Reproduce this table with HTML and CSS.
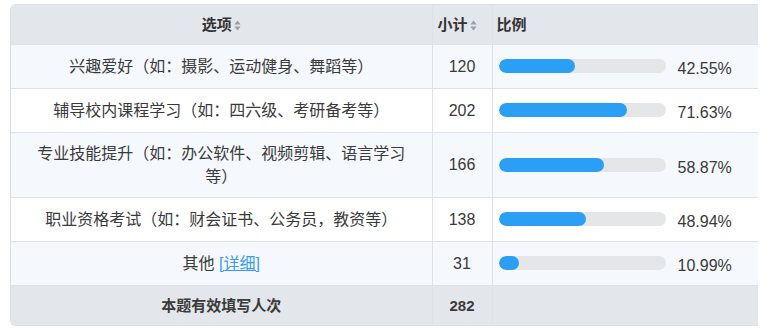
FILE: index.html
```html
<!DOCTYPE html>
<html lang="zh">
<head>
<meta charset="utf-8">
<link rel="stylesheet" href="styles.css">
</head>
<body>
<div class="wrap">
<table class="tbl">
<colgroup><col class="c1"><col class="c2"><col class="c3"></colgroup>
<thead>
<tr class="head">
<th class="opt">选项<svg class="sort" width="7" height="11" viewBox="0 0 7 11"><path d="M3.5 0.5L6.6 4.5H0.4Z" fill="#9a9da2"/><path d="M3.5 10.5L6.6 6.5H0.4Z" fill="#9a9da2"/></svg></th>
<th class="cnt">小计<svg class="sort" width="7" height="11" viewBox="0 0 7 11"><path d="M3.5 0.5L6.6 4.5H0.4Z" fill="#9a9da2"/><path d="M3.5 10.5L6.6 6.5H0.4Z" fill="#9a9da2"/></svg></th>
<th class="pct">比例</th>
</tr>
</thead>
<tbody>
<tr class="row alt">
<td class="opt">兴趣爱好（如：摄影、运动健身、舞蹈等）</td>
<td class="cnt">120</td>
<td class="pct"><div class="barcell"><div class="track"><div class="fill" style="width:76px"></div></div><span class="num">42.55%</span></div></td>
</tr>
<tr class="row">
<td class="opt">辅导校内课程学习（如：四六级、考研备考等）</td>
<td class="cnt">202</td>
<td class="pct"><div class="barcell"><div class="track"><div class="fill" style="width:128px"></div></div><span class="num">71.63%</span></div></td>
</tr>
<tr class="row alt tall">
<td class="opt">专业技能提升（如：办公软件、视频剪辑、语言学习等）</td>
<td class="cnt">166</td>
<td class="pct"><div class="barcell"><div class="track"><div class="fill" style="width:105px"></div></div><span class="num">58.87%</span></div></td>
</tr>
<tr class="row">
<td class="opt">职业资格考试（如：财会证书、公务员，教资等）</td>
<td class="cnt">138</td>
<td class="pct"><div class="barcell"><div class="track"><div class="fill" style="width:87px"></div></div><span class="num">48.94%</span></div></td>
</tr>
<tr class="row alt">
<td class="opt">其他 <a class="link" href="#">[详细]</a></td>
<td class="cnt">31</td>
<td class="pct"><div class="barcell"><div class="track"><div class="fill" style="width:20px"></div></div><span class="num">10.99%</span></div></td>
</tr>
<tr class="foot">
<td class="opt">本题有效填写人次</td>
<td class="cnt">282</td>
<td class="pct"></td>
</tr>
</tbody>
</table>
</div>
</body>
</html>
```
FILE: styles.css
```css
* { box-sizing: border-box; }
html, body { margin: 0; padding: 0; background: #ffffff; }
body {
  padding: 4px 0 0 10px;
  font-family: "Liberation Sans", "Noto Sans CJK SC", Arial, sans-serif;
  color: #3a3a3a;
  font-size: 16px;
}
.wrap {
  width: 748px;
  border: 1px solid #dcdfe4;
  border-right: none;
  border-radius: 6px 0 0 6px;
  overflow: hidden;
}
.tbl {
  width: 747px;
  border-collapse: collapse;
  table-layout: fixed;
}
.c1 { width: 421px; }
.c2 { width: 60px; }
.c3 { width: 266px; }
.tbl th, .tbl td {
  border-right: 1px solid #dfe1e5;
  border-bottom: 1px solid #dfe1e5;
  padding: 0 10px;
  vertical-align: middle;
  line-height: 23px;
}
.tbl tr:last-child td { border-bottom: none; }
.tbl th:last-child, .tbl td:last-child { border-right: none; }
.head { height: 39px; background: #e3e6ea; }
.head th { font-weight: bold; color: #333333; font-size: 15px; }
.head th.opt { text-align: center; }
.head th.cnt { text-align: left; padding: 0 2px 0 5px; }
.head th.pct { text-align: left; padding-left: 4px; }
.sort { margin-left: 2px; vertical-align: -1px; }
.row { height: 44px; background: #ffffff; }
.row.alt { background: #f5f8fc; }
.row.tall { height: 65px; }
.row td.opt { text-align: center; padding: 0 15px; }
.row td.cnt, .foot td.cnt { text-align: center; padding: 0; }
.foot { height: 40px; background: #e3e6ea; }
.foot td { font-weight: bold; text-align: center; font-size: 15px; }
.tbl td.pct { padding: 0 0 0 6px; }
.barcell { display: flex; align-items: center; gap: 12px; }
.track {
  width: 167px;
  height: 14px;
  border-radius: 7px;
  background: #e5e6e8;
  overflow: hidden;
}
.fill { height: 100%; background: #2b9ff6; border-radius: 7px; }
.num { padding-top: 5px; color: #3a3a3a; }
.link { color: #3a9cf2; text-decoration: underline; }
```
